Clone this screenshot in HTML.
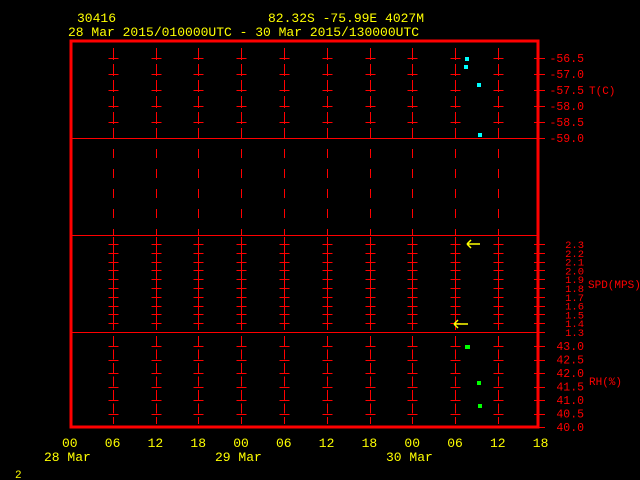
<!DOCTYPE html>
<html><head><meta charset="utf-8"><style>
html,body{margin:0;padding:0;background:#000;width:640px;height:480px;overflow:hidden}
svg{display:block}
text{font-family:"Liberation Mono",monospace}
</style></head><body>
<svg id="s" width="640" height="480" xmlns="http://www.w3.org/2000/svg">
<g fill="#ffff00" font-size="13">
<text x="77" y="22">30416</text>
<text x="268" y="22">82.32S  -75.99E  4027M</text>
<text x="68" y="36">28 Mar 2015/010000UTC - 30 Mar 2015/130000UTC</text>
<text x="15" y="478" font-size="11">2</text>
</g>
<g id="g" stroke="#ff0000" fill="none"></g>
<g id="t" fill="#ff0000" font-size="11.5"></g>
<g id="y" fill="#ffff00" font-size="13"></g>
<g fill="#00ffff"><rect x="465" y="57" width="4" height="4"/><rect x="464" y="65" width="4" height="4"/><rect x="477" y="83" width="4" height="4"/><rect x="478" y="133" width="4" height="4"/></g>
<g fill="#00ff00"><rect x="465" y="345" width="5" height="4"/><rect x="477" y="381" width="4" height="4"/><rect x="478" y="404" width="4" height="4"/></g>
<g stroke="#ffff00" stroke-width="1.5" fill="none">
<path d="M467 244h13M467 244l4-4M467 244l4 4"/>
<path d="M454 324h14M454 324l4-4M454 324l4 4"/>
</g>
</svg>
<script>
var g=document.getElementById('g'),t=document.getElementById('t'),yy=document.getElementById('y'),h='',tx='',yt='';
function L(x1,y1,x2,y2,w,extra){h+='<line x1="'+x1+'" y1="'+y1+'" x2="'+x2+'" y2="'+y2+'" stroke-width="'+(w||1)+'" '+(extra||'')+'/>';}
var xs=[];for(var i=1;i<11;i++)xs.push(70+42.8*i);
var tT=[58,74,90,106,122],tS=[],tR=[];
for(i=0;i<11;i++)tS.push(244+8.8*i);
for(i=0;i<7;i++)tR.push(346+13.5*i);
xs.forEach(function(x){
 x=Math.round(x)+0.5;
 L(x,48,x,138,1,'stroke-dasharray="12 4"');
 L(x,149,x,235,1,'stroke-dasharray="9 11"');
 L(x,237,x,330,1);
 L(x,336,x,424,1,'stroke-dasharray="10 3.5"');
 tT.concat(tS).concat(tR.slice(0,6)).forEach(function(y){L(x-5,Math.round(y)+0.5,x+5,Math.round(y)+0.5,1);});
});
L(70,138.5,545,138.5,1);L(70,235.5,538,235.5,1);L(70,332.5,545,332.5,1);
h+='<rect x="71" y="41" width="467" height="386" stroke-width="3"/>';
var labs=[];
[['-56.5',58],['-57.0',74],['-57.5',90],['-58.0',106],['-58.5',122],['-59.0',138]].forEach(function(a){labs.push(a);});
['2.3','2.2','2.1','2.0','1.9','1.8','1.7','1.6','1.5','1.4','1.3'].forEach(function(v,i){labs.push([v,tS[i],1]);});
['43.0','42.5','42.0','41.5','41.0','40.5','40.0'].forEach(function(v,i){labs.push([v,tR[i]]);});
labs.forEach(function(a){var y=Math.round(a[1])+0.5;L(534,y,545,y,1);
 tx+='<text x="584" text-anchor="end" y="'+(a[1]+4)+'"'+(a[2]?' font-size="10.5"':'')+'>'+a[0]+'</text>';});
tx+='<text x="589" y="94" font-size="11">T(C)</text><text x="588" y="288" font-size="11">SPD(MPS)</text><text x="589" y="385" font-size="11">RH(%)</text>';
var hl=['00','06','12','18','00','06','12','18','00','06','12','18'];
hl.forEach(function(v,i){yt+='<text x="'+(70+42.8*i-8)+'" y="447">'+v+'</text>';});
yt+='<text x="44" y="461">28 Mar</text><text x="215" y="461">29 Mar</text><text x="386" y="461">30 Mar</text>';
g.innerHTML=h;t.innerHTML=tx;yy.innerHTML=yt;
</script>
</body></html>
